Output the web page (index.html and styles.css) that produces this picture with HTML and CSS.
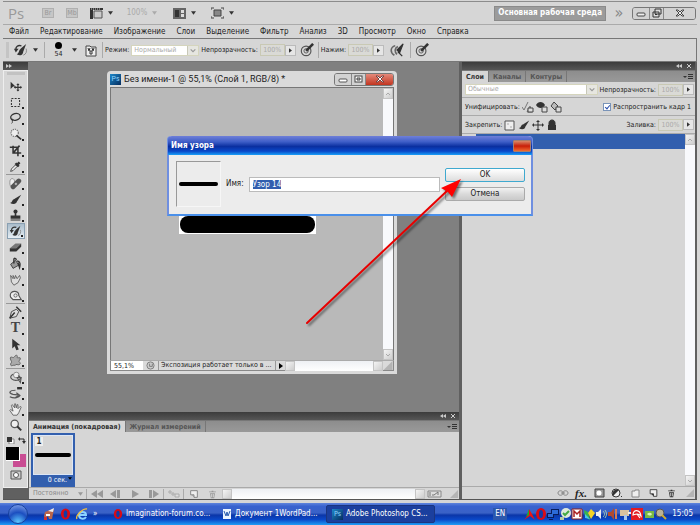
FILE: index.html
```html
<!DOCTYPE html>
<html lang="ru">
<head>
  <meta charset="UTF-8" />
  <meta name="viewport" content="width=device-width, initial-scale=1.0" />
  <title>Adobe Photoshop CS5</title>
  <link rel="stylesheet" href="styles.css">
</head>
<body>
  <svg class="sprite" aria-hidden="true">
    <symbol id="down" viewBox="0 0 6 4"><path d="M0 0h6L3 4z"/></symbol>
    <symbol id="right" viewBox="0 0 4 6"><path d="M0 0l4 3-4 3z"/></symbol>
    <symbol id="chevron" viewBox="0 0 6 6"><path d="M1 2l2 2 2-2" fill="none" stroke="currentColor"/></symbol>
    <symbol id="chevron-up" viewBox="0 0 6 6"><path d="M1 4l2-2 2 2" fill="none" stroke="currentColor"/></symbol>
    <symbol id="panelmenu" viewBox="0 0 10 6"><path d="M0 2h4L2 4zM5 0h5v1H5zM5 2h5v1H5zM5 4h5v1H5z"/></symbol>
    <symbol id="collapse" viewBox="0 0 16 6"><path d="M0 3l3-2v4zM3 3l3-2v4z"/><path d="M11 1l4 4M15 1l-4 4" stroke="currentColor" fill="none"/></symbol>
    <symbol id="expand" viewBox="0 0 8 6"><path d="M0 1l3 2-3 2zM3 1l3 2-3 2z"/></symbol>
    <symbol id="grip" viewBox="0 0 8 8"><path d="M8 0v8H0z" fill="#b4b4b4"/></symbol>
    <symbol id="move" viewBox="0 0 16 16"><path d="M2 2l6 6H5l-3 3z"/><path d="M11 5v8M7 9h8" stroke="currentColor" stroke-width="1.4"/><path d="M11 4l2 2H9zM11 14l2-2H9zM6 9l2-2v4zM16 9l-2-2v4z"/></symbol>
    <symbol id="marquee" viewBox="0 0 16 16"><rect x="3" y="3" width="10" height="10" fill="none" stroke="currentColor" stroke-width="1.3" stroke-dasharray="2.4 1.6"/></symbol>
    <symbol id="lasso" viewBox="0 0 16 16"><ellipse cx="8" cy="6" rx="6" ry="4" transform="rotate(-15 8 6)" fill="none" stroke="currentColor" stroke-width="1.6"/><path d="M4 8c-2 1 0 3 1 2s-1-2-1 0 1 3-1 4" fill="none" stroke="currentColor"/></symbol>
    <symbol id="wand" viewBox="0 0 16 16"><circle cx="7" cy="6" r="4.5" fill="#eee" stroke="#777" stroke-width="1.5" stroke-dasharray="1.6 1"/><path d="M9 9l6 5" stroke="currentColor" stroke-width="2"/></symbol>
    <symbol id="crop" viewBox="0 0 16 16"><path d="M5 2v9h10M1 4h10v11M6 10l7-8" fill="none" stroke="currentColor" stroke-width="1.9"/></symbol>
    <symbol id="dropper" viewBox="0 0 16 16"><path d="M2 14l1-3 5-5 2 2-5 5z" fill="#eee" stroke="currentColor"/><path d="M8 4l4 4M10 6l3-3" stroke="currentColor" stroke-width="3"/></symbol>
    <symbol id="heal" viewBox="0 0 16 16"><ellipse cx="4" cy="7" rx="3" ry="5" fill="#eee" stroke="#888"/><path d="M5 12l7-7" stroke="#555" stroke-width="6" stroke-linecap="round"/><path d="M7 8.500h3M8.500 7v3" stroke="#ddd"/></symbol>
    <symbol id="brush" viewBox="0 0 16 16"><path d="M15 2L7 7l3 3z"/><path d="M8 7C3 7 5 12 1 12c4 3 9 2 9-3z"/></symbol>
    <symbol id="stamp" viewBox="0 0 16 16"><circle cx="8" cy="3" r="2.500"/><path d="M7 4h2v4h5v4H2V8h5zM2 13h12v1H2z"/></symbol>
    <symbol id="history" viewBox="0 0 16 16"><path d="M14 1L8 6l3 3zM9 6C6 6 7 11 4 12c3 2 7 2 7-4z"/><path d="M9 3C5 2 3 4 3 7" fill="none" stroke="currentColor" stroke-width="1.500"/><path d="M14 6c1 3 0 6-3 7" stroke="#888" fill="none"/><path d="M1 6h5l-3 4z"/></symbol>
    <symbol id="eraser" viewBox="0 0 16 16"><path d="M1 9l7-6h7l-6 6z" fill="#777"/><path d="M1 9h8v4H1zM9 9l6-6v4l-6 6z"/></symbol>
    <symbol id="bucket" viewBox="0 0 16 16"><path d="M2 9l6-5 4 6-7 4z" fill="#999" stroke="currentColor"/><path d="M6 8V3c0-2 3-2 3 1M10 5c4 0 4 4 3 8l-2-6" fill="none" stroke="currentColor" stroke-width="1.7"/></symbol>
    <symbol id="smudge" viewBox="0 0 16 16"><path d="M2 3l3 4V3l2 4 1-4 2 4 3-4 1 3-3 6-5 3-3-4z" fill="#ddd" stroke="#555"/></symbol>
    <symbol id="dodge" viewBox="0 0 16 16"><path d="M2 10C-1 1 13 1 12 8l3 5H5z" fill="#eee" stroke="#555" stroke-width="1.400"/><circle cx="8" cy="8" r="2" fill="none" stroke="#555"/></symbol>
    <symbol id="pen" viewBox="0 0 16 16"><path d="M1 15l2-8 6-3 3 3-3 6z" fill="#ddd" stroke="currentColor"/><path d="M1 15l6-7M9 1l6 6" stroke="currentColor" stroke-width="1.8"/></symbol>
    <symbol id="arrow" viewBox="0 0 16 16"><path d="M4 1v12l3-3 2 5 3-1-2-5h4z"/></symbol>
    <symbol id="shape" viewBox="0 0 16 16"><path d="M2 4c2-1 3 2 5-1s4-1 3 1 5-1 4 2-3 2-1 4 0 4-3 3-2 2-3 1-5 2-5-1 2-2 1-4-2-4-1-5z" fill="#aaa" stroke="#555"/></symbol>
    <symbol id="rotate" viewBox="0 0 16 16"><circle cx="9" cy="5" r="3.500" fill="#eee" stroke="#777"/><path d="M5 4C-2 8 5 13 12 11c4-2 1-5-1-5M10 8l4 6 1-6z" fill="none" stroke="#555" stroke-width="1.400"/></symbol>
    <symbol id="orbit" viewBox="0 0 16 16"><path d="M8 4C0 4-1 8 5 9l8 1M1 12c6 3 11 1 13-2M9 7l4 3-5 3" fill="none" stroke="#555" stroke-width="1.500"/><path d="M10 0h6v3h-6z"/></symbol>
    <symbol id="hand" viewBox="0 0 16 16"><path d="M5 15L1 9l1-1 3 2-2-7 1-1 3 4V1h1l1 5 1-4h1v5l3-3 1 1-3 7-2 3z" fill="#eee" stroke="#555"/></symbol>
    <symbol id="zoom" viewBox="0 0 16 16"><circle cx="7" cy="6" r="4.500" fill="#eee" stroke="#555" stroke-width="1.5"/><path d="M10 9l5 5" stroke="currentColor" stroke-width="2.4"/></symbol>
    <symbol id="target" viewBox="0 0 16 16"><circle cx="7" cy="9" r="5.5" fill="none" stroke="#555" stroke-width="1.300"/><circle cx="7" cy="9" r="2.5" fill="none" stroke="#555"/><path d="M7 9l8-8" stroke="#333" stroke-width="3"/></symbol>
    <symbol id="trash" viewBox="0 0 12 12"><path d="M2 3h8v1H2zM5 2h2v1H5zM3 5h6l-1 6H4z"/><path d="M5 6v4M7 6v4" stroke="#ddd"/></symbol>
    <symbol id="page" viewBox="0 0 12 12"><path d="M2 2h8v8H6V7H2z" fill="#eee" stroke="currentColor"/><path d="M3 7h3v3z"/></symbol>
    <symbol id="lock" viewBox="0 0 12 12"><path d="M2 6h8v5H2z"/><path d="M3 7V4c0-4 6-4 6 0v3" stroke="currentColor" fill="currentColor"/></symbol>
    <symbol id="opera" viewBox="0 0 12 12"><ellipse cx="6" cy="6" rx="5" ry="6" fill="#d90b16"/><ellipse cx="6" cy="6" rx="2" ry="4" fill="#103ca8"/></symbol>
  </svg>

  <div class="app">
    <header class="appbar">
      <span class="logo">Ps</span>
      <button class="badge" disabled>Br</button>
      <button class="badge">Mb</button>
      <button class="flat extras" aria-label="Вспомогательные элементы">
        <svg width="13" height="12"><path d="M0 1h13v2H0zM0 1h3v11H0z"/><path d="M4 4h8v7H4z" fill="#ccc" stroke="#555"/><path d="M1 2h1m1 0h1m1 0h1m1 0h1m1 0h1" stroke="#ccc"/></svg>
        <svg class="down"><use href="#down"/></svg>
      </button>
      <button class="flat percent" disabled>100% <svg class="down"><use href="#down"/></svg></button>
      <button class="flat" aria-label="Упорядочить документы">
        <svg width="13" height="12"><path d="M0 1h13v11H0z" fill="#666"/><path d="M2 3h4v7H2z" fill="#333"/><path d="M8 3h3v3H8zM8 7h3v3H8z" fill="#ddd"/></svg>
        <svg class="down"><use href="#down"/></svg>
      </button>
      <button class="flat" aria-label="Режимы экрана">
        <svg width="13" height="12"><path d="M3 3h7v6H3z" fill="#888" stroke="#444"/><path d="M0 3V1h3M10 1h3v2M0 9v2h3M10 11h3V9" fill="none" stroke="#444"/></svg>
        <svg class="down"><use href="#down"/></svg>
      </button>
      <button class="workspace-name">Основная рабочая среда</button>
      <span class="more">»</span>
      <div class="winbuttons">
        <button aria-label="Свернуть"><svg width="10" height="8"><rect x="1" y="4" width="8" height="3" rx="1" fill="#eee" stroke="#444"/></svg></button>
        <button aria-label="Восстановить"><svg width="10" height="10"><path d="M3 1h6v5H3zM1 4h6v5H1z" fill="#ddd" stroke="#333"/><path d="M3 6h2v1H3z"/></svg></button>
        <button aria-label="Закрыть"><svg width="10" height="8"><path d="M1 1h2l2 2 2-2h2L6 4l3 3H7L5 5 3 7H1l3-3z" fill="#eee" stroke="#444"/></svg></button>
      </div>
    </header>

    <nav class="menu">
      <a href="#file">Файл</a><a href="#edit">Редактирование</a><a href="#image">Изображение</a><a href="#layers">Слои</a><a href="#select">Выделение</a><a href="#filter">Фильтр</a><a href="#analysis">Анализ</a><a href="#3d">3D</a><a href="#view">Просмотр</a><a href="#window">Окно</a><a href="#help">Справка</a>
    </nav>

    <div class="options">
      <span class="handle"></span>
      <button class="flat tool-preset" aria-label="Архивная кисть"><svg width="15" height="15"><use href="#history"/></svg><svg class="down"><use href="#down"/></svg></button>
      <span class="sep"></span>
      <button class="flat brush-size"><span class="dot"></span>54</button>
      <svg class="down"><use href="#down"/></svg>
      <button class="flat brush-panel" aria-label="Панель кистей"><svg width="12" height="13"><path d="M1 2h4l1 1h5v9H1z" fill="#eee" stroke="#444"/><path d="M3 4l1 3 1-3M7 4l1 3 1-3M5 7h2v3H5z" stroke="#333" fill="none"/></svg></button>
      <span class="sep"></span>
      <label for="mode">Режим:</label>
      <span class="select mode"><select id="mode" disabled><option>Нормальный</option></select><svg><use href="#chevron"/></svg></span>
      <label for="opacity">Непрозрачность:</label>
      <span class="spin"><input id="opacity" type="text" value="100%" disabled><button aria-label="Изменить"><svg><use href="#right"/></svg></button></span>
      <svg class="ico" width="14" height="14"><use href="#target"/></svg>
      <span class="sep"></span>
      <label for="flow">Нажим:</label>
      <span class="spin"><input id="flow" type="text" value="100%" disabled><button aria-label="Изменить"><svg><use href="#right"/></svg></button></span>
      <svg class="ico air" width="14" height="14" viewBox="0 0 16 16"><path d="M6 3c-6 2-6 8-1 11M9 4c-4 2-4 6-1 9" fill="none" stroke="#666" stroke-width="1.8"/><path d="M15 1L8 8l3 3zM9 10l5 5" stroke="#333" stroke-width="1.4"/></svg>
      <span class="sep"></span>
      <svg class="ico" width="14" height="14"><use href="#target"/></svg>
    </div>

    <div class="workspace">
      <aside class="tools">
        <div class="darkbar"><svg width="8" height="6"><use href="#expand"/></svg></div>
        <div class="toolbox">
          <span class="grab"></span>
          <button aria-label="Перемещение"><svg><use href="#move"/></svg></button>
          <button class="sub" aria-label="Область"><svg><use href="#marquee"/></svg></button>
          <button class="sub" aria-label="Лассо"><svg><use href="#lasso"/></svg></button>
          <button class="sub" aria-label="Быстрое выделение"><svg><use href="#wand"/></svg></button>
          <button class="sub" aria-label="Рамка"><svg><use href="#crop"/></svg></button>
          <button class="sub" aria-label="Пипетка"><svg><use href="#dropper"/></svg></button>
          <hr>
          <button class="sub" aria-label="Восстанавливающая кисть"><svg><use href="#heal"/></svg></button>
          <button class="sub" aria-label="Кисть"><svg><use href="#brush"/></svg></button>
          <button class="sub" aria-label="Штамп"><svg><use href="#stamp"/></svg></button>
          <button class="sub active" aria-label="Архивная кисть"><svg><use href="#history"/></svg></button>
          <button class="sub" aria-label="Ластик"><svg><use href="#eraser"/></svg></button>
          <button class="sub" aria-label="Заливка"><svg><use href="#bucket"/></svg></button>
          <button class="sub" aria-label="Палец"><svg><use href="#smudge"/></svg></button>
          <button class="sub" aria-label="Губка"><svg><use href="#dodge"/></svg></button>
          <hr>
          <button class="sub" aria-label="Перо"><svg><use href="#pen"/></svg></button>
          <button class="sub type" aria-label="Текст">T</button>
          <button class="sub" aria-label="Выделение контура"><svg><use href="#arrow"/></svg></button>
          <button class="sub" aria-label="Произвольная фигура"><svg><use href="#shape"/></svg></button>
          <hr>
          <button class="sub" aria-label="Вращение 3D-объекта"><svg><use href="#rotate"/></svg></button>
          <button class="sub" aria-label="Вращение 3D-камеры"><svg><use href="#orbit"/></svg></button>
          <button class="sub" aria-label="Рука"><svg><use href="#hand"/></svg></button>
          <button aria-label="Масштаб"><svg><use href="#zoom"/></svg></button>
          <svg class="reset" viewBox="0 0 20 8"><path d="M3 3h5v5H3z" fill="#fff" stroke="#888"/><path d="M1 1h5v5H1zM14 1l-2 2 2 2zM16 5h4l-2 3z"/><path d="M14 3h4v3" fill="none" stroke="#222"/></svg>
          <svg class="swatches" viewBox="0 0 20 20"><path d="M7 7h13v13H7z" fill="#c94d93"/><path d="M0 0h14v14H0z" fill="#fff"/><path d="M0 0h13v13H0z" fill="#000"/></svg>
          <button class="mask" aria-label="Быстрая маска"><svg width="12" height="10"><path d="M1 1h10v8H1z" fill="#ccc" stroke="#555"/><circle cx="6" cy="5" r="2.5" fill="#fff" stroke="#555"/></svg></button>
        </div>
      </aside>

      <main class="center">
        <div class="desktop">
          <section class="doc">
            <div class="doc-title">
              <span class="psicon">Ps</span>
              <span>Без имени-1 @ 55,1% (Слой 1, RGB/8) *</span>
              <div class="winbuttons docbuttons">
                <button aria-label="Свернуть"><svg width="10" height="8"><rect x="1" y="4" width="8" height="3" rx="1" fill="#fff" stroke="#555"/></svg></button>
                <button aria-label="Развернуть"><svg width="9" height="8"><rect x="1" y="1" width="7" height="6" fill="#fff" stroke="#444"/><path d="M3 3h3v2H3z" fill="#ccc" stroke="#444"/></svg></button>
                <button class="close" aria-label="Закрыть"><svg width="10" height="8"><path d="M1 1h2l2 2 2-2h2L6 4l3 3H7L5 5 3 7H1l3-3z" fill="#fff" stroke="#744"/></svg></button>
              </div>
            </div>
            <div class="doc-body">
              <div class="canvas"><div class="pill"></div></div>
              <div class="vscroll"><span><svg><use href="#chevron-up"/></svg></span><span><svg><use href="#chevron"/></svg></span></div>
            </div>
            <div class="doc-status">
              <input type="text" value="55,1%" aria-label="Масштаб">
              <svg class="clock" viewBox="0 0 10 10"><circle cx="5" cy="5" r="4" fill="#ccc" stroke="#777"/><path d="M4 3v3h3V3" fill="none" stroke="#777"/></svg>
              <span class="status-text">Экспозиция работает только в ...</span>
              <button class="flat" aria-label="Меню состояния"><svg class="right"><use href="#right"/></svg></button>
              <div class="hscroll"><span></span><span></span></div>
              <svg width="10" height="9"><use href="#grip"/></svg>
            </div>
          </section>
        </div>

        <section class="animation">
          <div class="darkbar right-side"><svg width="16" height="6"><use href="#collapse"/></svg></div>
          <div class="tabs">
            <button class="on">Анимация (покадровая)</button><button>Журнал измерений</button>
            <svg class="panelmenu"><use href="#panelmenu"/></svg>
          </div>
          <div class="frames">
            <div class="frame">
              <div class="thumb"><b>1</b><i></i></div>
              <span>0 сек.<svg class="tiny"><use href="#down"/></svg></span>
            </div>
          </div>
          <div class="anim-foot">
            <span class="select loop"><select aria-label="Повтор" disabled><option>Постоянно</option></select><svg><use href="#down"/></svg></span>
            <span class="sep"></span>
            <button aria-label="Первый кадр"><svg width="12" height="8"><path d="M0 4l6-4v8zM6 4l6-4v8z"/></svg></button>
            <button aria-label="Предыдущий кадр"><svg width="12" height="8"><path d="M0 4l6-4v8zM7 0h3v8H7z"/></svg></button>
            <button aria-label="Воспроизвести"><svg width="12" height="8"><path d="M3 0l7 4-7 4z"/></svg></button>
            <button aria-label="Следующий кадр"><svg width="12" height="8"><path d="M1 0h3v8H1zM5 0l6 4-6 4z"/></svg></button>
            <span class="sep"></span>
            <button aria-label="Промежуточные кадры"><svg width="12" height="8"><path d="M1 1h2v2H1zM4 3h2v2H4zM7 4h4v3H7z" fill="#ddd" stroke="#aaa"/></svg></button>
            <span class="sep"></span>
            <button class="dark" aria-label="Новый кадр"><svg width="10" height="10"><use href="#page"/></svg></button>
            <button class="dark" aria-label="Удалить"><svg width="11" height="10"><use href="#trash"/></svg></button>
            <div class="hscroll"><span></span><span></span></div>
            <button class="dark" aria-label="Шкала времени"><svg width="15" height="8"><path d="M1 1h13v6H1z" fill="#ddd" stroke="#888"/><path d="M3 2v4M5 5h2l4-3v3" fill="none" stroke="#777"/></svg></button>
            <svg class="corner" width="8" height="8"><use href="#grip"/></svg>
          </div>
        </section>
      </main>

      <aside class="panel">
        <div class="darkbar right-side"><svg width="16" height="6"><use href="#collapse"/></svg></div>
        <div class="tabs">
          <button class="on">Слои</button><button>Каналы</button><button>Контуры</button>
          <svg class="panelmenu"><use href="#panelmenu"/></svg>
        </div>
        <div class="row blend">
          <span class="select"><select aria-label="Режим наложения" disabled><option>Обычные</option></select><svg><use href="#chevron"/></svg></span>
          <label for="lopacity">Непрозрачность:</label>
          <span class="spin"><input id="lopacity" type="text" value="100%" disabled><button aria-label="Изменить"><svg><use href="#right"/></svg></button></span>
        </div>
        <div class="row">
          <span>Унифицировать:</span>
          <svg class="lk"><path d="M0 6l2 3 4-8M8 5l2 6H5z" fill="none" stroke="#777"/><path d="M6 7h5v4H6z" fill="#ddd" stroke="#444"/></svg>
          <svg class="lk"><path d="M0 4c2-4 7-4 9 0-2 4-7 4-9 0z"/><path d="M6 6h5v5H6z" fill="#ddd" stroke="#444"/></svg>
          <svg class="lk"><path d="M4 1l4 4-3 4-4-4z" fill="#bbb" stroke="#444"/><path d="M6 6h5v5H6z" fill="#ddd" stroke="#444"/></svg>
          <label class="check"><input type="checkbox" checked>Распространить кадр 1</label>
        </div>
        <div class="row lockrow">
          <span>Закрепить:</span>
          <svg class="lk"><path d="M1 2h9v9H1z" fill="#eee" stroke="#555"/><path d="M3 4h2v2H3zM6 7h2v2H6z" fill="#ccc"/></svg>
          <svg class="lk" viewBox="0 0 14 14"><use href="#brush"/></svg>
          <svg class="lk"><path d="M6 2v9M1 6h10" stroke="#333"/><path d="M6 1l2 2H4zM6 12l2-2H4zM0 6l2-2v4zM12 6l-2-2v4z"/></svg>
          <svg class="lk" viewBox="0 0 12 12"><use href="#lock"/></svg>
          <label for="fill" class="push">Заливка:</label>
          <span class="spin"><input id="fill" type="text" value="100%" disabled><button aria-label="Изменить"><svg><use href="#right"/></svg></button></span>
        </div>
        <div class="layers">
          <div class="list"><div class="layer"></div></div>
          <div class="vscroll"><span><svg><use href="#chevron-up"/></svg></span><span><svg><use href="#chevron"/></svg></span></div>
        </div>
        <div class="panel-foot">
          <button aria-label="Связать слои"><svg width="12" height="10"><path d="M1 5c0-3 5-3 5 0s-5 3-5 0M6 5c0-3 5-3 5 0s-5 3-5 0M4 5h4" fill="none" stroke="#888"/></svg></button>
          <button class="fx" aria-label="Стиль слоя">fx.</button>
          <button aria-label="Слой-маска"><svg width="11" height="10"><path d="M1 1h9v8H1z" fill="#999" stroke="#444"/><circle cx="5" cy="5" r="2.5" fill="#fff"/></svg></button>
          <button aria-label="Корректирующий слой"><svg width="12" height="10"><circle cx="5" cy="5" r="4" fill="#eee" stroke="#333"/><path d="M2 8C0 4 4 0 8 2zM10 8h1v1h-1z"/></svg></button>
          <button aria-label="Группа"><svg width="11" height="10"><path d="M2 3h3V2h4v7H2z" fill="#eee" stroke="#888"/></svg></button>
          <button aria-label="Новый слой"><svg width="11" height="10"><use href="#page"/></svg></button>
          <button aria-label="Удалить слой"><svg width="11" height="10"><use href="#trash"/></svg></button>
          <svg class="corner" width="8" height="8"><use href="#grip"/></svg>
        </div>
      </aside>
    </div>
  </div>

  <footer class="taskbar">
    <button class="start" aria-label="Пуск"></button>
    <div class="quick">
      <a href="#irfan" aria-label="Просмотр картинок"><svg width="12" height="12"><path d="M2 4l5-2 4-1-1 5-1 5H6L5 8 2 11 1 8z" fill="#b9664b"/><path d="M5 3l6-3-1 4z" fill="#eee"/><path d="M3 6h4v2H3z" fill="#fff"/><path d="M1 9h3v3H1z" fill="#c33"/></svg></a>
      <a href="#opera" aria-label="Opera"><svg width="11" height="12"><use href="#opera"/></svg></a>
      <a href="#ie" aria-label="Internet Explorer"><svg width="12" height="12"><path d="M10 9c-2 3-7 2-7-2s7-4 7 0H3" fill="none" stroke="#8cd2ff" stroke-width="2"/><path d="M1 11C-1 8 7 0 11 1" fill="none" stroke="#f5c13c" stroke-width="1.3"/></svg></a>
      <span>»</span>
    </div>
    <div class="tasks">
      <button><svg width="10" height="12"><use href="#opera"/></svg>Imagination-forum.co...</button>
      <button><svg width="10" height="12"><path d="M1 1h8v10H1z" fill="#eaf3ff"/><path d="M2 3l2 5 1-4 1 4 2-5" fill="none" stroke="#2a5cad"/></svg>Документ 1WordPad...</button>
      <button class="current"><span class="psicon">Ps</span>Adobe Photoshop CS...</button>
    </div>
    <div class="tray">
      <span class="lang">EN</span>
      <svg viewBox="0 0 12 12"><path d="M6 1l3 5 3 6-5-4-6 4 5-6z" fill="#e11"/><path d="M6 1v6L3 9z" fill="#2a2"/></svg>
      <svg viewBox="0 0 12 12"><use href="#opera"/></svg>
      <svg viewBox="0 0 12 12"><path d="M4 1h8v6H4zM0 5h7v5H0zM2 11h4v1H2z" fill="#071d5c"/><path d="M5 2h6v4H5zM1 6h5v3H1z" fill="#2c6bd8"/></svg>
      <svg viewBox="0 0 12 12"><circle cx="7" cy="5" r="5" fill="#dfe9dd"/><path d="M4 5l2 2 4-4" fill="none" stroke="#4a4" stroke-width="2"/><path d="M1 9h4v3H1z" fill="#b5c8a5"/></svg>
      <svg viewBox="0 0 12 12"><path d="M1 1h10v10H1z" fill="#fff" stroke="#822"/><path d="M3 9V3l3 3 3-3v6" fill="none" stroke="#a22" stroke-width="1.5"/></svg>
      <svg viewBox="0 0 12 12"><path d="M1 2l4 2 2 8-5-3z" fill="#3bb54a"/><path d="M5 5l3-4 4 4-4 6z" fill="#f5d327"/><path d="M2 6l5 5-5-1z" fill="#49c3ee"/></svg>
      <svg viewBox="0 0 12 12"><path d="M1 4h2l3-3v10L3 8H1z" fill="#eee"/><path d="M8 3c2 2 2 4 0 6M10 2c2 3 2 5 0 8" fill="none" stroke="#9ec5b5"/></svg>
      <svg viewBox="0 0 12 12"><path d="M1 4h3l3-4v12L4 8H1z" fill="#b04a30"/><path d="M8 1h2v10H8z" fill="#d77b55"/></svg>
      <svg viewBox="0 0 12 12"><path d="M1 2h9v6H1z" fill="#d8c3a0"/><path d="M5 7h3v5H5z" fill="#a8c8ee"/><path d="M9 4h3v2H9z" fill="#eee"/></svg>
      <svg viewBox="0 0 12 12"><path d="M0 0h12v12H0z" fill="#e31b23"/><path d="M2 7c0-6 7-6 8 1-3-3-5-2-8-1zM6 6l3 4" fill="none" stroke="#fff" stroke-width="1.2"/></svg>
      <svg viewBox="0 0 12 12"><path d="M2 3h9v7H2z" fill="#78b943"/><path d="M4 6c2-2 4-1 5 0-1 2-3 2-5 0z" fill="#d8f0b8"/></svg>
      <svg viewBox="0 0 12 12"><circle cx="5" cy="5" r="4" fill="#b9b298" stroke="#555"/><path d="M7 7l4 4" stroke="#ca3" stroke-width="2"/></svg>
      <time>15:05</time>
    </div>
  </footer>

  <form class="dialog" role="dialog" aria-labelledby="dialog-title">
    <div class="dialog-title"><span id="dialog-title">Имя узора</span><button type="button" aria-label="Закрыть"></button></div>
    <div class="dialog-body">
      <div class="preview"><i></i></div>
      <label for="name">Имя:</label>
      <div class="namebox"><input id="name" type="text" value="Узор 14"></div>
      <div class="actions">
        <button type="button" class="ok">OK</button>
        <button type="button">Отмена</button>
      </div>
    </div>
    <svg class="pointer" viewBox="0 0 170 160">
      <g class="shade"><path d="M9 151L150 18" stroke="#e80000" stroke-width="2" stroke-linecap="round"/><path d="M163 7l-9 18-4-5-7-4z" fill="#f00"/></g>
    </svg>
  </form>
  <script>
    document.getElementById("name").select();
  </script>
</body>
</html>
```
FILE: styles.css
```css
* {
  box-sizing: border-box;
}

body {
  margin: 0;
  height: 100vh;
  position: relative;
  display: flex;
  flex-direction: column;
  overflow: hidden;
  background: #d6d6d6;
  color: #222;
  font-family: "DejaVu Sans Condensed", "DejaVu Sans", sans-serif;
  font-size: 8px;
  line-height: 12px;
}

button, input, select {
  font: inherit;
  color: inherit;
  margin: 0;
  padding: 0;
  border: 0;
  background: none;
  border-radius: 0;
}

button {
  display: flex;
  align-items: center;
  justify-content: center;
}

select {
  appearance: none;
  width: 100%;
  opacity: 1;
}

svg {
  flex: none;
  display: block;
  color: #333;
  fill: #333;
}

a {
  color: inherit;
  text-decoration: none;
}

.sprite {
  position: absolute;
  width: 0;
  height: 0;
}

.app {
  flex: 1;
  min-height: 0;
  display: flex;
  flex-direction: column;
  border: solid #d6d6d6;
  border-width: 1px 3px 3px;
  box-shadow: inset 0 1px 0 #8c8c8c, inset 0 -1px 0 #555;
  padding-bottom: 1px;
}

.down {
  width: 5px;
  height: 4px;
}

/* top bar */
.appbar {
  display: flex;
  align-items: center;
  height: 24px;
  padding: 1px 1px 0 5px;
  border-bottom: 1px solid #aaa;
}

.logo {
  width: 34px;
  font-family: "Open Sans", sans-serif;
  font-size: 15px;
  color: #999;
}

.badge {
  width: 12px;
  height: 10px;
  margin-right: 12px;
  border: 1px solid #b0b0b0;
  background: #c6c6c6;
  color: #999;
  font-size: 7px;
}

.flat {
  gap: 5px;
  margin-right: 15px;
}

.extras {
  margin-right: 10px;
}

.percent {
  width: 38px;
  color: #aaa;
  margin-right: 12px;
}

.percent svg {
  fill: #aaa;
}

.workspace-name {
  margin-left: auto;
  height: 15px;
  padding: 0 3px;
  background: #9b9b9b;
  border: 1px solid #8a8a8a;
  color: #fff;
  font-weight: bold;
}

.more {
  width: 26px;
  text-align: center;
  font-size: 16px;
  color: #888;
}

.winbuttons {
  display: flex;
  border: 1px solid #777;
  border-radius: 3px;
  overflow: hidden;
}

.winbuttons button {
  width: 17px;
  height: 11px;
  border-right: 1px solid #888;
  background: #d2d2d2;
}

.winbuttons button:nth-child(2) {
  width: 14px;
}

.winbuttons button:last-child {
  width: 31px;
  border-right: 0;
}

.menu {
  display: flex;
  gap: 11px;
  height: 13px;
  padding-left: 6px;
  line-height: 13px;
}

.options {
  display: flex;
  align-items: center;
  height: 24px;
  padding-left: 3px;
  border: 1px solid #777;
  border-left: 0;
  font-size: 7px;
}

.handle {
  width: 3px;
  height: 16px;
  background: #c4c4c4;
}

.tool-preset {
  margin: 0 6px 0 4px;
}

.sep {
  width: 1px;
  height: 16px;
  background: #aaa;
}

.brush-size {
  flex-direction: column;
  gap: 0;
  width: 27px;
  margin: 0;
  line-height: 8px;
}

.dot {
  width: 7px;
  height: 7px;
  margin-bottom: 1px;
  border-radius: 50%;
  background: #000;
}

.brush-panel {
  margin: 0 5px 0 8px;
}

label {
  white-space: nowrap;
}

.options label {
  margin: 0 2px;
}

.select {
  display: grid;
  align-items: center;
  height: 11px;
  background: #fff;
  border: 1px solid #d5d5bd;
  color: #aaa;
}

.select select,
.select svg {
  grid-area: 1 / 1;
}

.select select {
  padding-left: 2px;
  line-height: 9px;
}

.select svg {
  justify-self: end;
  width: 11px;
  height: 9px;
  padding: 1px;
  background: #e6e6e0;
  border-left: 1px solid #c8c8b8;
  color: #999;
}

.mode {
  width: 68px;
}

.spin {
  display: flex;
  align-items: center;
}

.spin input {
  width: 25px;
  height: 12px;
  border: 1px solid #c9c9b4;
  background: #dadad6;
  color: #aaa;
  text-align: center;
}

.spin button {
  width: 11px;
  height: 11px;
  background: #e6e6e6;
  border: 1px solid #bbb;
}

.spin button svg {
  width: 3px;
  height: 5px;
}

.ico {
  margin: 0 4px;
}

.air {
  margin: 0 6px;
}

/* workspace */
.workspace {
  flex: 1;
  min-height: 0;
  display: grid;
  grid-template-columns: 25px 1fr 236px;
  background: #606060;
  font-size: 7px;
}

.darkbar {
  flex: none;
  display: flex;
  align-items: center;
  height: 8px;
  padding: 0 3px;
  background: linear-gradient(#3c3c3c, #565656);
}

.darkbar svg {
  fill: #ccc;
  color: #ccc;
}

.right-side {
  justify-content: flex-end;
}

.tools {
  display: flex;
  flex-direction: column;
}

.toolbox {
  display: flex;
  flex-direction: column;
  align-items: center;
  padding-bottom: 6px;
  background: #d6d6d6;
  border: 1px solid #eee;
}

.grab {
  width: 18px;
  height: 3px;
  margin: 1px 0 3px;
  background: #c2c2c2;
}

.toolbox button {
  position: relative;
  width: 18px;
  height: 16px;
}

.toolbox button svg {
  width: 13px;
  height: 13px;
}

.sub::after {
  content: "";
  position: absolute;
  right: 1px;
  bottom: 1px;
  width: 2px;
  height: 2px;
  background: #222;
}

.toolbox .active {
  border: 1px solid #8aa0b2;
  background: linear-gradient(#a9bccb, #e6eef4);
}

.toolbox .type {
  font-family: "Liberation Serif", serif;
  font-size: 14px;
  font-weight: bold;
  color: #444;
}

.toolbox hr {
  width: 19px;
  height: 1px;
  margin: 0;
  border: 0;
  background: #999;
}

.reset {
  width: 20px;
  height: 8px;
  margin: 3px 0;
}

.swatches {
  width: 20px;
  height: 20px;
}

.toolbox .mask {
  margin-top: 2px;
  height: 12px;
}

.toolbox .mask svg {
  width: 12px;
  height: 10px;
}

.center {
  display: flex;
  flex-direction: column;
  min-width: 0;
  padding-right: 2px;
}

.desktop {
  flex: 1;
  position: relative;
  background: #808080;
}

/* document window floating on the desktop */
.doc {
  position: absolute;
  left: 79px;
  top: 9px;
  width: 290px;
  height: 303px;
  display: flex;
  flex-direction: column;
  padding: 0 3px 3px;
  border-radius: 4px 4px 0 0;
  background: #dadada;
}

.doc-title {
  display: flex;
  align-items: center;
  gap: 3px;
  height: 16px;
  font-family: Roboto, sans-serif;
  font-size: 9px;
  white-space: nowrap;
}

.doc-title .winbuttons {
  margin-left: auto;
}

.doc-title .docbuttons button:last-child {
  width: 27px;
}

.winbuttons .close {
  background: linear-gradient(#e58a7b, #c23520);
}

.psicon {
  width: 11px;
  height: 11px;
  background: linear-gradient(135deg, #1e88c9, #052c5e);
  color: #8fd4ff;
  font-size: 7px;
  line-height: 11px;
  text-align: center;
}

.doc-body {
  flex: 1;
  display: flex;
  border: 1px solid #777;
  border-bottom: 0;
}

.canvas {
  flex: 1;
  display: flex;
  align-items: center;
  justify-content: center;
  background: #b9b9b9;
}

.pill {
  width: 137px;
  height: 19px;
  padding: 1px;
  background: #fff;
}

.pill::before {
  content: "";
  display: block;
  height: 17px;
  border-radius: 8px;
  background: #000;
}

.vscroll {
  width: 10px;
  display: flex;
  flex-direction: column;
  justify-content: space-between;
  background: #f8f9fc;
}

.vscroll span,
.hscroll span {
  width: 10px;
  height: 11px;
  display: grid;
  place-items: center;
  border: 1px solid #c4c4c4;
  background: linear-gradient(135deg, #f4f4f4, #cdcdcd);
}

.vscroll svg {
  width: 6px;
  height: 6px;
  color: #aaa;
}

.hscroll {
  flex: 1;
  display: flex;
  justify-content: space-between;
  background: linear-gradient(#eef0f4, #fff);
}

.hscroll span {
  height: 10px;
}

.doc-status {
  display: flex;
  align-items: center;
  height: 11px;
  border: 1px solid #888;
  border-top-color: #aaa;
}

.doc-status input {
  width: 32px;
  height: 9px;
  padding-left: 3px;
  background: #fff;
}

.clock {
  width: 9px;
  height: 9px;
  margin: 0 3px;
}

.status-text {
  width: 118px;
  padding-left: 2px;
  white-space: nowrap;
  border: solid #999;
  border-width: 0 1px;
  line-height: 9px;
}

.doc-status .flat {
  width: 9px;
  margin: 0;
}

.right {
  width: 4px;
  height: 6px;
  fill: #000;
}

/* tabs shared by both panels */
.tabs {
  flex: none;
  display: flex;
  height: 12px;
  background: linear-gradient(#8d8d8d, #999);
  border-top: 1px solid #777;
}

.tabs button {
  padding: 0 4px;
  color: #555;
  font-weight: bold;
  border-right: 1px solid #777;
}

.tabs .on {
  background: #d6d6d6;
  color: #333;
}

.panelmenu {
  width: 10px;
  height: 6px;
  margin: 3px 2px 0 auto;
}

.animation {
  display: flex;
  flex-direction: column;
  margin-left: 1px;
  height: 87px;
  background: #d6d6d6;
}

.frames {
  flex: 1;
  padding: 1px 0 0 2px;
}

.frame {
  width: 44px;
  height: 54px;
  padding: 2px;
  background: #325fae;
  color: #fff;
  text-align: right;
}

.thumb {
  height: 40px;
  padding: 1px;
  border: 1px solid #dce6f5;
  background: #d6d6d6;
  color: #222;
  text-align: left;
}

.thumb b {
  display: block;
  width: 8px;
  background: #eee;
  font-size: 8px;
  line-height: 9px;
  text-align: center;
}

.thumb i,
.preview i {
  display: block;
  height: 4px;
  border-radius: 2px;
  background: #000;
}

.thumb i {
  margin-top: 7px;
}

.frame span {
  display: flex;
  justify-content: flex-end;
  line-height: 10px;
}

.tiny {
  width: 4px;
  height: 3px;
  margin: 2px 1px;
  fill: #000;
}

.anim-foot {
  display: flex;
  align-items: center;
  height: 13px;
  border-top: 1px solid #aaa;
}

.anim-foot button {
  width: 19px;
}

.anim-foot svg {
  fill: #999;
}

.anim-foot .dark svg {
  color: #777;
}

.anim-foot .sep {
  height: 10px;
}

.loop {
  width: 57px;
  padding-left: 2px;
  background: none;
  border: 0;
  color: #888;
}

.loop svg {
  width: 5px;
  height: 4px;
  margin-right: 3px;
  padding: 0;
  border: 0;
  background: none;
}

.corner {
  margin: 0 1px 0 6px;
}

/* layers panel */
.panel {
  display: flex;
  flex-direction: column;
  min-width: 0;
  margin-left: 1px;
  background: #d6d6d6;
  border-right: 2px solid #606060;
}

.row {
  display: flex;
  align-items: center;
  gap: 2px;
  height: 18px;
  padding: 0 1px 0 3px;
  border-bottom: 1px solid #aaa;
  white-space: nowrap;
}

.blend {
  height: 16px;
}

.blend .select {
  flex: 1;
}

.lk {
  width: 12px;
  height: 12px;
}

.check,
.push {
  margin-left: auto;
}

.check {
  display: flex;
  align-items: center;
  gap: 2px;
  padding-right: 3px;
}

.check input {
  appearance: none;
  display: grid;
  place-items: center;
  width: 8px;
  height: 8px;
  border: 1px solid #7a94b8;
  background: #fff;
}

.check input:checked::before {
  content: "";
  width: 2px;
  height: 4px;
  border: solid #2a4fae;
  border-width: 0 1px 1px 0;
  transform: rotate(40deg);
}

.layers {
  flex: 1;
  display: flex;
}

.list {
  flex: 1;
}

.layer {
  height: 15px;
  margin-left: 14px;
  background: #325fae;
}

.panel-foot {
  display: flex;
  align-items: center;
  justify-content: flex-end;
  height: 13px;
  border-top: 1px solid #aaa;
}

.panel-foot button {
  width: 18px;
}

.fx {
  font-family: "Liberation Serif", serif;
  font-size: 11px;
  font-weight: bold;
  font-style: italic;
}

/* taskbar */
.taskbar {
  display: flex;
  align-items: center;
  height: 22px;
  background: linear-gradient(#5f84dc, #3862cf 15%, #3a62c6 45%, #0b36a8 55%, #0a48c8 75%, #1f9df5);
  color: #fff;
  white-space: nowrap;
}

.start {
  width: 20px;
  height: 20px;
  margin: 0 15px 0 8px;
  border: 1px solid #16409c;
  border-radius: 50%;
  background: radial-gradient(circle at 50% 95%, #5cc8ff, #1c4fc0 50%, #8aa8ee);
}

.quick {
  display: flex;
  align-items: center;
  gap: 5px;
  width: 65px;
}

.tasks {
  display: flex;
}

.tasks button {
  width: 109px;
  height: 18px;
  justify-content: flex-start;
  gap: 3px;
  padding-left: 5px;
  border-radius: 2px;
}

.tasks .current {
  background: #1b3f9e;
  border: 1px solid #1b3580;
}

.tray {
  margin-left: auto;
  display: flex;
  align-items: center;
  padding-right: 7px;
}

.tray svg {
  width: 12px;
  height: 12px;
}

.lang {
  padding: 0 2px;
  margin-right: 16px;
  background: #2c57ad;
}

.tray time {
  margin-left: 5px;
}

/* dialog */
.dialog {
  position: absolute;
  left: 50%;
  top: 136px;
  width: 366px;
  margin-left: -183px;
  border: 2px solid #6f8fe0;
  border-width: 0 2px 2px;
  border-bottom-color: #4a90ea;
  border-radius: 4px 4px 0 0;
  background: #ececec;
}

.dialog-title {
  display: flex;
  align-items: center;
  justify-content: space-between;
  height: 19px;
  margin: 0 -1px;
  padding: 0 1px 0 3px;
  border-radius: 4px 4px 0 0;
  background: linear-gradient(#6f7fd8, #3f5fc8 30%, #0a2fa0 55%, #0a48c8 80%, #19a0f8);
  color: #fff;
  font-weight: bold;
}

.dialog-title button {
  width: 18px;
  height: 12px;
  border: 1px solid #a87f6a;
  border-radius: 1px;
  background: linear-gradient(#d88a6a, #c81e08 50%, #f06a30);
}

.dialog-body {
  display: flex;
  align-items: center;
  gap: 5px;
  padding: 6px 6px 7px 7px;
}

.preview {
  width: 45px;
  height: 46px;
  padding: 20px 2px;
  border: 1px solid #aaa;
  border-color: #999 #f6f6f6 #f6f6f6 #999;
}

.namebox {
  flex: 1;
}

.namebox input {
  width: 100%;
  height: 15px;
  padding: 0 3px;
  border: 1px solid #bbb;
  outline: 0;
  background: #fff;
}

.namebox input::selection {
  background: #325fae;
  color: #fff;
}

.actions {
  display: grid;
  gap: 5px;
  width: 80px;
}

.actions button {
  height: 14px;
  border: 1px solid #aaa;
  border-radius: 2px;
  background: linear-gradient(#f2f2f2, #dadada 50%, #c9c9c9);
}

.actions .ok {
  border-color: #3fa9cf;
  background: linear-gradient(#fff, #ddd);
}

/* red pointer drawn over the dialog and the desktop */
.pointer {
  position: absolute;
  left: 129px;
  top: 36px;
  width: 170px;
  height: 160px;
  pointer-events: none;
}

.shade {
  filter: drop-shadow(2px 2px 1px rgba(0, 0, 0, 0.5));
}
```
